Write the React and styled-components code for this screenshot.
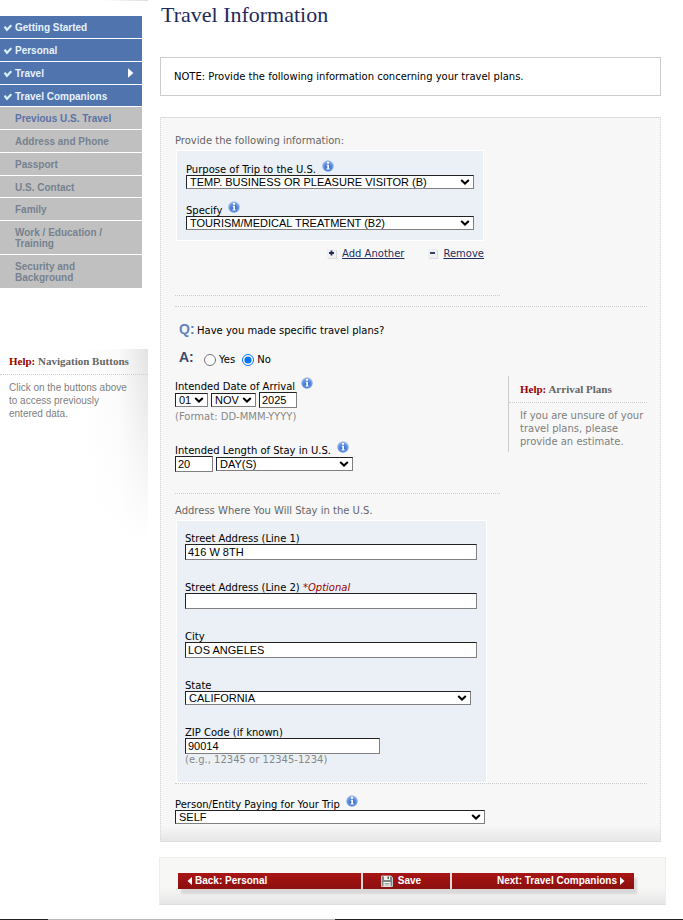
import React from 'react';
import styled, { createGlobalStyle } from 'styled-components';

const GlobalStyle = createGlobalStyle`
    body {
        margin: 0;
        background: #ffffff;
        font: 10px/12px "DejaVu Sans", Verdana, sans-serif;
        color: #000000;
    }
    * { box-sizing: border-box; }
`
const Layout = styled.div`
    display: flex;
    align-items: flex-start;
`
const Sidebar = styled.aside`
    flex: 0 0 148px;
`
const HeaderShade = styled.div`
    height: 1px;
    margin: 0 0 15px 104px;
    background: linear-gradient(to right, #ffffff, #dddddd);
`
const NavList = styled.ul`
    list-style: none;
    margin: 0 6px 0 0;
    padding: 0;
    display: flex;
    flex-direction: column;
    gap: 1px;
`
const NavItem = styled.li`
    &:nth-child(4n) a { padding-bottom: 4px; }
`
const NavLink = styled.a`
    display: flex;
    padding: 6px 8px 5px 4px;
    background: ${props => props.$done ? '#5074ae' : '#c0c0c0'};
    color: ${props => props.$done ? '#e6f2fb' : props.$next ? '#5a73a8' : '#76828f'};
    font: bold 10px/11px "Liberation Sans", Arial, sans-serif;
    text-decoration: none;
`
const NavMark = styled.span`
    flex: 0 0 11px;
    svg { display: block; margin-top: 2px; }
`
const NavText = styled.span`
    flex: 1;
    padding-right: 20px;
`
const SideHelp = styled.section`
    min-height: 200px;
    margin-top: 61px;
    background:
        linear-gradient(to bottom, rgba(255, 255, 255, 0), #ffffff 95%),
        linear-gradient(to right, #ffffff 55%, #fafafa 80%, #e3e3e3);
`
const HelpTitle = styled.h2`
    margin: 0;
    padding: ${props => props.$side ? '6px 0 6px 9px' : '7px 0 6px 11px'};
    border-bottom: 1px dotted #cccccc;
    color: #666666;
    font: bold 11px/13px "Liberation Serif", "Times New Roman", serif;
    span { color: #990000; }
`
const HelpText = styled.p`
    margin: 0;
    padding: ${props => props.$side ? '6px 16px 0 9px' : '6px 0 4px 11px'};
    color: #808080;
    font-size: 10px;
    line-height: 13px;
    font-family: ${props => props.$side ? '"Liberation Sans", Arial, sans-serif' : 'inherit'};
`
const Main = styled.main`
    flex: 1;
    min-width: 0;
    padding: 0 17px 0 11px;
`
const Title = styled.h1`
    margin: 0 0 28px 2px;
    color: #1f2a5c;
    font: normal 22px/29px "Liberation Serif", "Times New Roman", serif;
`
const Note = styled.p`
    margin: 0 5px 21px 1px;
    padding: 12px 13px;
    border: 1px solid #cccccc;
    line-height: 13px;
`
const Panel = styled.form`
    margin: 0 5px 15px 1px;
    padding: 17px 13px 17px 14px;
    border: 1px dotted #d4d4d4;
    border-bottom: 1px solid #dddddd;
    background: linear-gradient(to top, #e6e6e6, #f7f7f7 15px);
`
const Caption = styled.p`
    margin: 0;
    color: #666666;
`
const AddressCaption = styled(Caption)`
    padding-top: 11px;
`
const Group = styled.fieldset`
    width: ${props => props.$width}px;
    margin: 3px 0 0 1px;
    padding: ${props => props.$address ? '11px 8px 16px' : '9px 9px 10px'};
    border: 1px solid #ffffff;
    background: #eaf0f5;
    display: flex;
    flex-direction: column;
    gap: ${props => props.$address ? 21 : 12}px;
`
const FieldBox = styled.div`
    display: flex;
    flex-direction: column;
    align-items: flex-start;
`
const LabelRow = styled.div`
    display: flex;
    align-items: flex-end;
    gap: 6px;
    min-height: ${props => props.$info ? 15 : 12}px;
    line-height: 10px;
    svg { align-self: flex-start; }
`
const Optional = styled.em`
    color: #990000;
`
const Controls = styled.div`
    display: flex;
    align-items: center;
    gap: 3px;
`
const SelectBox = styled.span`
    display: grid;
    align-items: center;
    width: ${props => props.$width}px;

    select, svg { grid-area: 1 / 1; }
    svg {
        justify-self: end;
        margin-right: 4px;
        pointer-events: none;
    }
`
const Select = styled.select`
    appearance: none;
    width: 100%;
    height: 14px;
    padding: 0 0 0 3px;
    border: 1px solid;
    border-color: #222222 #808080 #808080 #222222;
    border-radius: 0;
    background: #ffffff;
    color: #000000;
    font: 11px/12px "Liberation Sans", Arial, sans-serif;
`
const Input = styled.input`
    width: ${props => props.$width}px;
    height: 16px;
    padding: 0 2px;
    border: 1px solid;
    border-color: #222222 #808080 #808080 #222222;
    border-radius: 0;
    background: #ffffff;
    color: #000000;
    font: 11px/14px "Liberation Sans", Arial, sans-serif;
`
const Hint = styled.span`
    color: #888888;
    padding-top: ${props => props.$spaced ? 3 : 0}px;
`
const LinkRow = styled.div`
    width: 309px;
    display: flex;
    justify-content: flex-end;
    gap: 24px;
    padding: 7px 0 35px;
`
const ActionLink = styled.a`
    display: flex;
    align-items: center;
    gap: 5px;
    color: #1f2d5c;
    text-decoration: none;
    span { text-decoration: underline; }
`
const Rule = styled.hr`
    width: ${props => props.$short ? '325px' : 'auto'};
    margin: 0;
    border: 0;
    border-top: 1px dotted #cccccc;
`
const SectionRule = styled(Rule)`
    margin-top: 10px;
`
const Columns = styled.div`
    display: flex;
    justify-content: space-between;
    align-items: flex-start;
`
const Answers = styled.div`
    flex: 0 0 325px;
    display: flex;
    flex-direction: column;
`
const QuestionRow = styled.div`
    display: flex;
    align-items: center;
    padding: ${props => props.$answer ? '8px 0 6px 4px' : '14px 0 0 4px'};
`
const Letter = styled.span`
    flex: 0 0 ${props => props.$answer ? 25 : 18}px;
    margin-bottom: ${props => props.$answer ? 6 : 4}px;
    color: ${props => props.$answer ? '#3d4a6b' : '#6484bb'};
    font: bold 14px/16px "Liberation Sans", Arial, sans-serif;
`
const Choice = styled.label`
    display: flex;
    align-items: center;
    gap: 3px;
    margin-right: 7px;
`
const Radio = styled.input`
    width: 12px;
    height: 12px;
    margin: 0;
`
const PlanFields = styled.div`
    display: flex;
    flex-direction: column;
    gap: 18px;
    padding-bottom: 21px;
`
const PanelHelp = styled.aside`
    flex: 0 0 139px;
    margin-top: 69px;
    border-left: 1px solid #cccccc;
`
const PayerBox = styled.div`
    padding-top: 11px;
`
const ButtonBar = styled.nav`
    padding: 15px 31px 15px 18px;
    border: 1px solid #eeeeea;
    border-bottom-color: #dddddd;
    background: linear-gradient(to top, #e6e6e6, #f7f7f6 16px);
`
const Buttons = styled.div`
    display: grid;
    grid-template-columns: 1fr 87px 1fr;
    gap: 2px;
    background: #dddddd;
    box-shadow: 3px 5px 2px #d8d8d8;
`
const Button = styled.button`
    display: flex;
    align-items: center;
    justify-content: ${props => props.$align};
    gap: ${props => props.$save ? 5 : 3}px;
    padding: ${props => props.$save ? '0 18px 0 8px' : '0 9px'};
    border: 0;
    background: linear-gradient(to bottom, #a91515, #8b100e);
    color: #ffffff;
    font: bold 10px/16px "Liberation Sans", Arial, sans-serif;
    white-space: nowrap;
`
const BottomEdge = styled.div`
    height: 1px;
    margin-top: 14px;
    background: linear-gradient(to right, #222222 7%, #bbbbbb 7%, #bbbbbb 49%, #222222 49%);
`

const steps = [
    { name: 'Getting Started', done: true },
    { name: 'Personal', done: true },
    { name: 'Travel', done: true, open: true },
    { name: 'Travel Companions', done: true },
    { name: 'Previous U.S. Travel', next: true },
    { name: 'Address and Phone' },
    { name: 'Passport' },
    { name: 'U.S. Contact' },
    { name: 'Family' },
    { name: 'Work / Education / Training' },
    { name: 'Security and Background' },
]

const CheckIcon = () => (
    <svg width="8" height="8" viewBox="0 0 8 8" aria-hidden="true">
        <path d="M0.6 2.6 L3 5.8 L7.3 1.2" fill="none" stroke="#d9f0fb" strokeWidth="2.2" />
    </svg>
)

const ArrowIcon = ({ left, size = 8 }) => (
    <svg width={size / 2 + 1} height={size} viewBox="0 0 5 8" aria-hidden="true">
        <path d={left ? 'M5 0 L0.5 4 L5 8 Z' : 'M0 0 L4.5 4 L0 8 Z'} fill="#ffffff" />
    </svg>
)

const CaretIcon = () => (
    <svg width="10" height="6" viewBox="0 0 10 6" aria-hidden="true">
        <path d="M1.2 1 L5 4.6 L8.8 1" fill="none" stroke="#000000" strokeWidth="2" />
    </svg>
)

const InfoIcon = () => (
    <svg width="12" height="12" viewBox="0 0 12 12" role="img" aria-label="Help">
        <defs>
            <radialGradient id="info" cx="50%" cy="60%" r="55%">
                <stop offset="0" stopColor="#2f66cc" />
                <stop offset="0.6" stopColor="#5a8ade" />
                <stop offset="1" stopColor="#a8c2f0" />
            </radialGradient>
        </defs>
        <circle cx="6" cy="6" r="5.8" fill="url(#info)" />
        <circle cx="6" cy="2.9" r="1.1" fill="#ffffff" />
        <path d="M4.6 4.8 H7 V8.6 H7.7 V9.5 H4.5 V8.6 H5.3 V5.7 H4.6 Z" fill="#ffffff" />
    </svg>
)

const SignIcon = ({ plus }) => (
    <svg width="10" height="10" viewBox="0 0 10 10" aria-hidden="true">
        <rect x="1" y="1" width="9" height="9" fill="#d9dde2" />
        <rect width="9" height="9" fill="#eef0f2" />
        <path d={plus ? 'M2 4 H7 M4.5 1.5 V6.5' : 'M2 4 H7'} stroke="#1f2d5c" strokeWidth="1.8" />
    </svg>
)

const SaveIcon = () => (
    <svg width="12" height="12" viewBox="0 0 12 12" aria-hidden="true">
        <path d="M0.5 1 H10 L11.5 2.5 V11.5 H0.5 Z" fill="#7d8583" stroke="#c5cac8" />
        <rect x="3" y="1" width="6" height="4" fill="#f2f2f2" />
        <rect x="6.5" y="1.5" width="1.5" height="2.5" fill="#59605e" />
        <rect x="2.5" y="7" width="7" height="4.5" fill="#f7f7f7" />
        <path d="M3.5 8.5 H8.5 M3.5 10 H8.5" stroke="#8a908e" strokeWidth="0.8" />
    </svg>
)

const Field = ({ id, label, info, optional, hint, hintSpaced, children }) => (
    <FieldBox>
        <LabelRow $info={info}>
            <label htmlFor={id}>
                {label}{optional && <Optional> *Optional</Optional>}
            </label>
            {info && <InfoIcon />}
        </LabelRow>
        {children}
        {hint && <Hint $spaced={hintSpaced}>{hint}</Hint>}
    </FieldBox>
)

const Dropdown = ({ id, width, value, label }) => (
    <SelectBox $width={width}>
        <Select id={id} defaultValue={value} aria-label={label}>
            <option>{value}</option>
        </Select>
        <CaretIcon />
    </SelectBox>
)

class App extends React.Component {
    constructor(props) {
        super(props);
        this.state = { plans: 'No' }
    }

    handlePlansChange(e) {
        this.setState({ plans: e.target.value })
    }

    render() {
        return (
            <>
                <GlobalStyle />
                <Layout>
                    <Sidebar>
                        <HeaderShade />
                        <NavList>
                            {steps.map((step) => (
                                <NavItem key={step.name}>
                                    <NavLink href="#" $done={step.done} $next={step.next}>
                                        <NavMark>{step.done && <CheckIcon />}</NavMark>
                                        <NavText>{step.name}</NavText>
                                        {step.open && <ArrowIcon size={10} />}
                                    </NavLink>
                                </NavItem>
                            ))}
                        </NavList>
                        <SideHelp>
                            <HelpTitle $side><span>Help:</span> Navigation Buttons</HelpTitle>
                            <HelpText $side>Click on the buttons above to access previously entered data.</HelpText>
                        </SideHelp>
                    </Sidebar>
                    <Main>
                        <Title>Travel Information</Title>
                        <Note>NOTE: Provide the following information concerning your travel plans.</Note>
                        <Panel id="travel">
                            <Caption>Provide the following information:</Caption>
                            <Group $width={308}>
                                <Field id="purpose" label="Purpose of Trip to the U.S." info>
                                    <Dropdown id="purpose" width={288} value="TEMP. BUSINESS OR PLEASURE VISITOR (B)" />
                                </Field>
                                <Field id="specify" label="Specify" info>
                                    <Dropdown id="specify" width={288} value="TOURISM/MEDICAL TREATMENT (B2)" />
                                </Field>
                            </Group>
                            <LinkRow>
                                <ActionLink href="#"><SignIcon plus /><span>Add Another</span></ActionLink>
                                <ActionLink href="#"><SignIcon /><span>Remove</span></ActionLink>
                            </LinkRow>
                            <Rule $short />
                            <SectionRule />
                            <Columns>
                                <Answers>
                                    <QuestionRow>
                                        <Letter>Q:</Letter>
                                        <span>Have you made specific travel plans?</span>
                                    </QuestionRow>
                                    <QuestionRow $answer>
                                        <Letter $answer>A:</Letter>
                                        {['Yes', 'No'].map((answer) => (
                                            <Choice key={answer}>
                                                <Radio
                                                    type="radio"
                                                    name="plans"
                                                    value={answer}
                                                    checked={this.state.plans === answer}
                                                    onChange={this.handlePlansChange.bind(this)}
                                                />
                                                {answer}
                                            </Choice>
                                        ))}
                                    </QuestionRow>
                                    <PlanFields>
                                        <Field id="day" label="Intended Date of Arrival" info hint="(Format: DD-MMM-YYYY)" hintSpaced>
                                            <Controls>
                                                <Dropdown id="day" width={33} value="01" />
                                                <Dropdown width={45} value="NOV" label="Month" />
                                                <Input $width={38} defaultValue="2025" aria-label="Year" />
                                            </Controls>
                                        </Field>
                                        <Field id="stay" label="Intended Length of Stay in U.S." info>
                                            <Controls>
                                                <Input id="stay" $width={38} defaultValue="20" />
                                                <Dropdown width={137} value="DAY(S)" label="Unit of stay" />
                                            </Controls>
                                        </Field>
                                    </PlanFields>
                                    <Rule />
                                </Answers>
                                <PanelHelp>
                                    <HelpTitle><span>Help:</span> Arrival Plans</HelpTitle>
                                    <HelpText>If you are unsure of your travel plans, please provide an estimate.</HelpText>
                                </PanelHelp>
                            </Columns>
                            <AddressCaption>Address Where You Will Stay in the U.S.</AddressCaption>
                            <Group $width={311} $address>
                                <Field id="street1" label="Street Address (Line 1)">
                                    <Input id="street1" $width={292} defaultValue="416 W 8TH" />
                                </Field>
                                <Field id="street2" label="Street Address (Line 2)" optional>
                                    <Input id="street2" $width={292} defaultValue="" />
                                </Field>
                                <Field id="city" label="City">
                                    <Input id="city" $width={292} defaultValue="LOS ANGELES" />
                                </Field>
                                <Field id="state" label="State">
                                    <Dropdown id="state" width={286} value="CALIFORNIA" />
                                </Field>
                                <Field id="zip" label="ZIP Code (if known)" hint="(e.g., 12345 or 12345-1234)">
                                    <Input id="zip" $width={195} defaultValue="90014" />
                                </Field>
                            </Group>
                            <Rule />
                            <PayerBox>
                                <Field id="payer" label="Person/Entity Paying for Your Trip" info>
                                    <Dropdown id="payer" width={310} value="SELF" />
                                </Field>
                            </PayerBox>
                        </Panel>
                        <ButtonBar>
                            <Buttons>
                                <Button type="button" $align="flex-start"><ArrowIcon left />Back: Personal</Button>
                                <Button type="submit" form="travel" $align="center" $save><SaveIcon />Save</Button>
                                <Button type="button" $align="flex-end">Next: Travel Companions<ArrowIcon /></Button>
                            </Buttons>
                        </ButtonBar>
                    </Main>
                </Layout>
                <BottomEdge />
            </>
        );
    }
};

export default App;
